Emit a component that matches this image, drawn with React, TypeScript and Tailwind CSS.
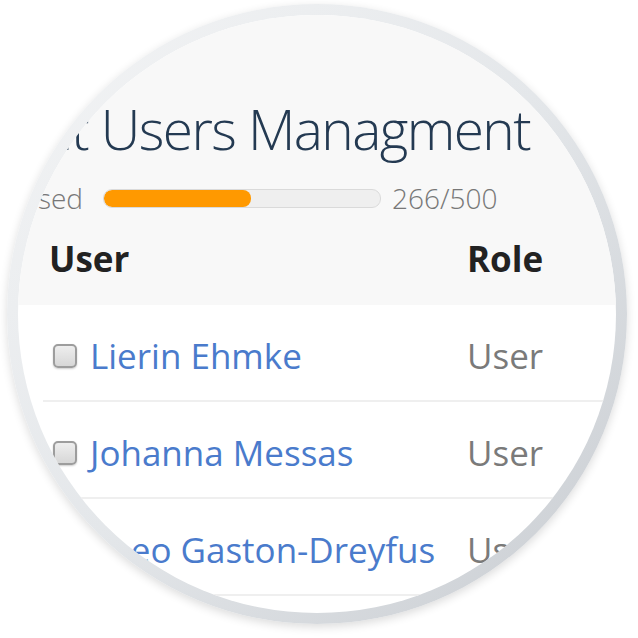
import React from "react";

const rows = [
  { name: "Lierin Ehmke", role: "User" },
  { name: "Johanna Messas", role: "User" },
  { name: "Theo Gaston-Dreyfus", role: "User" },
  { name: "Marcus Lindqvist", role: "Admin" },
];

function Checkbox() {
  return (
    <div className="w-[24px] h-[24px] shrink-0 rounded-[5px] border-2 border-[#9d9d9d] bg-linear-to-b from-[#eeeeee] to-[#d7d7d7] shadow-[0_1px_2px_rgba(0,0,0,0.2)]" />
  );
}

export default function App() {
  return (
    <div
      className="w-[638px] h-[638px] bg-white pt-[4px] pl-[7px] overflow-hidden"
      style={{ fontFamily: '"Open Sans", "Noto Sans", sans-serif' }}
    >
      <div className="w-[620px] h-[620px] rounded-full p-[11px] bg-linear-to-br from-[#f4f5f6] via-[#e4e7ea] to-[#c8ccd1] shadow-[0_3px_10px_rgba(0,0,0,0.14)]">
        <div className="w-[598px] h-[598px] rounded-full overflow-hidden bg-white">
          <div className="bg-[#f8f8f8] h-[290px] pt-[86px]">
            <div className="flex justify-end w-[512px] whitespace-nowrap text-[55px] leading-[55px] tracking-[-1.6px] font-light text-[#243a52]">
              Account Users Managment
            </div>
            <div className="flex items-center h-[28px] mt-[28px]">
              <div className="flex justify-end w-[65px] shrink-0 whitespace-nowrap text-[28px] leading-[28px] font-light text-[#777777]">
                Licenses used
              </div>
              <div className="ml-[20px] w-[278px] h-[19px] shrink-0 rounded-[9px] border border-[#dadada] bg-[#efefef] overflow-hidden">
                <div className="h-full bg-[#ff9900] rounded-[8px]" style={{ width: "53.2%" }} />
              </div>
              <div className="ml-[11px] whitespace-nowrap text-[28px] leading-[28px] font-light text-[#777777]">
                266/500
              </div>
            </div>
            <div className="flex mt-[29px] text-[35px] leading-[35px] font-bold text-[#222222] whitespace-nowrap">
              <div className="w-[449px] pl-[31px] shrink-0">User</div>
              <div>Role</div>
            </div>
          </div>
          {rows.map((r) => (
            <div
              key={r.name}
              className="ml-[25px] h-[97px] box-border border-b-2 border-[#efefef] pt-[6px] flex items-center whitespace-nowrap"
            >
              <div className="w-[424px] shrink-0 pl-[10px] flex items-center gap-[13px]">
                <Checkbox />
                <span className="text-[35px] leading-[35px] text-[#4a7bcc]">{r.name}</span>
              </div>
              <span className="text-[35px] leading-[35px] text-[#7a7a7a]">{r.role}</span>
            </div>
          ))}
        </div>
      </div>
    </div>
  );
}
